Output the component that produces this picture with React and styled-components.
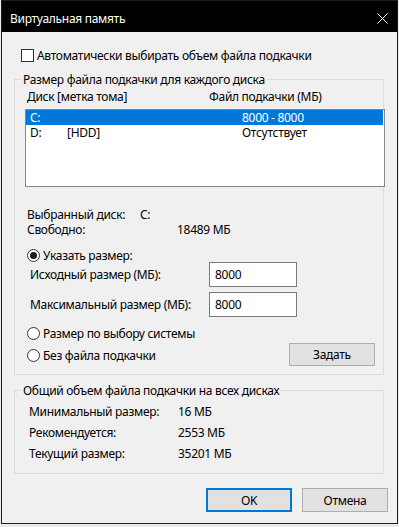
import React from 'react';
import styled, { createGlobalStyle } from 'styled-components';

const Global = createGlobalStyle`
  html, body { margin: 0; padding: 0; background: #e9e9e9; }
  body {
    font-family: "Noto Sans", "Segoe UI", sans-serif;
    font-size: 12px;
    letter-spacing: -0.3px;
    color: #000;
  }
  * { box-sizing: border-box; }
`;

const Window = styled.div`
  margin-left: 1px;
  width: 397px;
  height: 524px;
  border: 1px solid #1e1e1e;
  background: #f0f0f0;
  display: flex;
  flex-direction: column;
`;

const TitleBar = styled.div`
  height: 31px;
  flex: none;
  background: #000;
  color: #fff;
  display: flex;
  align-items: center;
  justify-content: space-between;
  padding: 3px 0 0 8px;
`;

const Title = styled.span`
  font-size: 12px;
  line-height: 15px;
`;

const Close = styled.div`
  width: 30px;
  height: 15px;
  display: flex;
  align-items: center;
  justify-content: center;
`;

const Body = styled.div`
  flex: 1;
  display: flex;
  flex-direction: column;
  padding: 16px 13px 0 12px;
`;

const CheckRow = styled.label`
  display: flex;
  align-items: center;
  gap: 3px;
  height: 15px;
  line-height: 15px;
  margin-left: 7px;
`;

const Checkbox = styled.span`
  width: 13px;
  height: 13px;
  border: 1px solid #333;
  background: #fff;
  flex: none;
`;

const Group = styled.fieldset`
  margin: ${(p) => p.$top}px 0 0 0;
  border: 1px solid #dcdcdc;
  padding: ${(p) => p.$padTop}px 8px ${(p) => p.$padBottom}px 10px;
  min-width: 0;
`;

const Legend = styled.legend`
  padding: 0 2px;
  margin-left: -4px;
  line-height: 15px;
`;

const Header = styled.div`
  display: grid;
  grid-template-columns: 182px 1fr;
  padding-left: 2px;
  line-height: 15px;
`;

const ListBox = styled.div`
  margin-top: 5px;
  margin-right: -10px;
  height: 78px;
  border: 1px solid #828790;
  background: #fff;
`;

const ListRow = styled.div`
  display: grid;
  grid-template-columns: 37px 175px 1fr;
  padding-left: 4px;
  height: 15px;
  line-height: 15px;
  margin-right: 1px;
  background: ${(p) => (p.$selected ? '#0078d7' : 'transparent')};
  color: ${(p) => (p.$selected ? '#fff' : '#000')};
`;

const InfoRow = styled.div`
  display: grid;
  grid-template-columns: ${(p) => p.$label}px 1fr;
  padding-left: ${(p) => p.$indent}px;
  height: ${(p) => p.$lh}px;
  line-height: ${(p) => p.$lh}px;
  margin-top: ${(p) => p.$top || 0}px;
`;

const RadioRow = styled.label`
  display: flex;
  align-items: center;
  gap: 3px;
  height: 15px;
  line-height: 15px;
  margin-left: 2px;
  margin-top: ${(p) => p.$top || 0}px;
`;

const Radio = styled.span`
  width: 13px;
  height: 13px;
  border-radius: 50%;
  border: 1px solid #333;
  background: #fff;
  flex: none;
  display: flex;
  align-items: center;
  justify-content: center;
  &::after {
    content: '';
    width: 7px;
    height: 7px;
    border-radius: 50%;
    background: #1a1a1a;
    display: ${(p) => (p.$checked ? 'block' : 'none')};
  }
`;

const SizeRow = styled.div`
  display: flex;
  align-items: center;
  padding-left: 5px;
  height: 25px;
  margin-top: ${(p) => p.$top}px;
`;

const SizeLabel = styled.span`
  width: 179px;
  flex: none;
`;

const Field = styled.input`
  width: 88px;
  height: 25px;
  border: 1px solid #7a7a7a;
  background: #fff;
  padding: 0 0 0 5px;
  font: inherit;
  letter-spacing: inherit;
  color: #000;
  outline: none;
`;

const Bottom = styled.div`
  display: flex;
  justify-content: space-between;
  margin-top: 9px;
`;

const RadioColumn = styled.div`
  display: flex;
  flex-direction: column;
  gap: 7px;
`;

const Button = styled.button`
  width: 86px;
  height: ${(p) => p.$h}px;
  font: inherit;
  letter-spacing: inherit;
  color: #000;
  background: #e1e1e1;
  border: ${(p) => (p.$default ? '2px solid #0078d7' : '1px solid #adadad')};
  padding: 0;
  flex: none;
`;

const SetButton = styled(Button)`
  align-self: flex-end;
  margin-bottom: -3px;
`;

const Footer = styled.div`
  display: flex;
  justify-content: flex-end;
  gap: 10px;
  margin-top: 14px;
  margin-right: -4px;
`;

export default function App() {
  return (
    <>
      <Global />
      <Window>
        <TitleBar>
          <Title>Виртуальная память</Title>
          <Close>
            <svg width="11" height="11" viewBox="0 0 11 11">
              <path d="M0.5 0.5 L10.5 10.5 M10.5 0.5 L0.5 10.5" stroke="#fff" strokeWidth="1" fill="none" />
            </svg>
          </Close>
        </TitleBar>
        <Body>
          <CheckRow>
            <Checkbox />
            <span>Автоматически выбирать объем файла подкачки</span>
          </CheckRow>

          <Group $top={9} $padTop={2} $padBottom={11}>
            <Legend>Размер файла подкачки для каждого диска</Legend>
            <Header>
              <span>Диск [метка тома]</span>
              <span>Файл подкачки (МБ)</span>
            </Header>
            <ListBox>
              <ListRow $selected>
                <span>C:</span>
                <span></span>
                <span>8000 - 8000</span>
              </ListRow>
              <ListRow>
                <span>D:</span>
                <span>[HDD]</span>
                <span>Отсутствует</span>
              </ListRow>
            </ListBox>

            <InfoRow $label={113} $indent={2} $lh={15} $top={20}>
              <span>Выбранный диск:</span>
              <span>C:</span>
            </InfoRow>
            <InfoRow $label={150} $indent={2} $lh={15}>
              <span>Свободно:</span>
              <span>18489 МБ</span>
            </InfoRow>

            <RadioRow $top={11}>
              <Radio $checked />
              <span>Указать размер:</span>
            </RadioRow>
            <SizeRow $top={-1}>
              <SizeLabel>Исходный размер (МБ):</SizeLabel>
              <Field defaultValue="8000" />
            </SizeRow>
            <SizeRow $top={5}>
              <SizeLabel>Максимальный размер (МБ):</SizeLabel>
              <Field defaultValue="8000" />
            </SizeRow>

            <Bottom>
              <RadioColumn>
                <RadioRow>
                  <Radio />
                  <span>Размер по выбору системы</span>
                </RadioRow>
                <RadioRow>
                  <Radio />
                  <span>Без файла подкачки</span>
                </RadioRow>
              </RadioColumn>
              <SetButton $h={23}>Задать</SetButton>
            </Bottom>
          </Group>

          <Group $top={8} $padTop={3} $padBottom={9}>
            <Legend>Общий объем файла подкачки на всех дисках</Legend>
            <InfoRow $label={149} $indent={4} $lh={21}>
              <span>Минимальный размер:</span>
              <span>16 МБ</span>
            </InfoRow>
            <InfoRow $label={149} $indent={4} $lh={21}>
              <span>Рекомендуется:</span>
              <span>2553 МБ</span>
            </InfoRow>
            <InfoRow $label={149} $indent={4} $lh={21}>
              <span>Текущий размер:</span>
              <span>35201 МБ</span>
            </InfoRow>
          </Group>

          <Footer>
            <Button $h={24} $default>OK</Button>
            <Button $h={24}>Отмена</Button>
          </Footer>
        </Body>
      </Window>
    </>
  );
}
